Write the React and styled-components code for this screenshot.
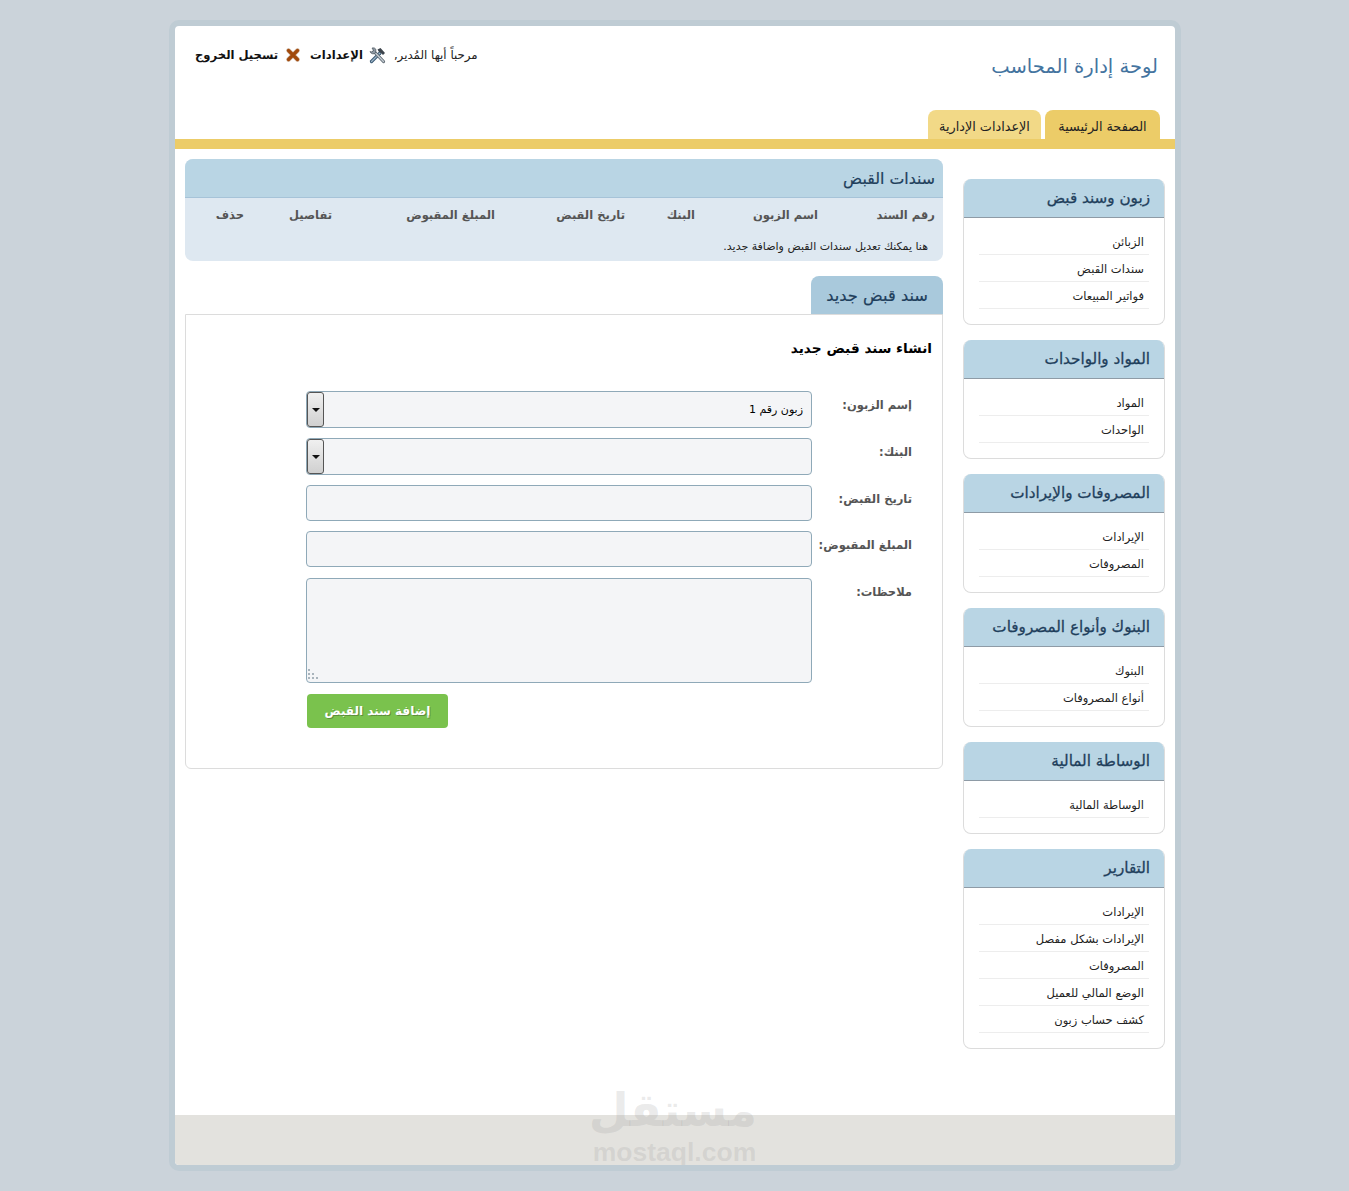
import styled, { createGlobalStyle } from "styled-components";

const GlobalStyle = createGlobalStyle`
	html, body {
		margin: 0;
		padding: 0;
		background: #cbd3da;
	}
	body {
		font-family: "DejaVu Sans", "Liberation Sans", sans-serif;
		font-size: 11px;
		color: #222;
	}
	* {
		box-sizing: border-box;
	}
`;

const Wrapper = styled.div`
	position: relative;
	width: 1012px;
	height: 1151px;
	margin: 20px 0 20px 169px;
	border: 6px solid #bfccd4;
	border-radius: 10px;
	background: #fff;
	display: flex;
	flex-direction: column;
	overflow: hidden;
`;

const Header = styled.header`
	height: 84px;
	padding: 0 17px 0 0;
	display: flex;
	justify-content: space-between;
	direction: rtl;
`;

const Title = styled.h1`
	margin: 27px 0 0;
	font-size: 19.5px;
	line-height: 28px;
	font-weight: 400;
	color: #44749f;
`;

const UserBar = styled.div`
	display: flex;
	align-items: center;
	height: 18px;
	margin: 20px 0 0 20px;
	direction: ltr;
	color: #222;
`;

const UserLink = styled.a`
	font-weight: 700;
	font-size: 11.6px;
	color: #111;
	direction: rtl;
	text-decoration: none;
`;

const Greeting = styled.span`
	direction: rtl;
	font-size: 11.8px;
	margin-left: 8px;
`;

const IconSlot = styled.span`
	display: inline-flex;
	margin: ${(p) => p.$margin};
`;

const Tabs = styled.nav`
	display: flex;
	direction: rtl;
	gap: 4px;
	height: 29px;
	padding-right: 15px;
`;

const Tab = styled.a`
	display: flex;
	align-items: center;
	justify-content: center;
	width: ${(p) => p.$w}px;
	padding-top: 3px;
	height: 29px;
	border-radius: 8px 8px 0 0;
	background: ${(p) => (p.$active ? "#eccc68" : "#f2d987")};
	color: #222;
	font-size: 12.8px;
`;

const GoldBar = styled.div`
	height: 10px;
	background: #eccc68;
`;

const Content = styled.div`
	flex: 1;
	display: flex;
	direction: rtl;
	padding: 10px 10px 0;
	justify-content: flex-start;
	gap: 20px;
`;

const Sidebar = styled.aside`
	width: 202px;
	padding-top: 20px;
	display: flex;
	flex-direction: column;
	gap: 15px;
`;

const SideCard = styled.section`
	border: 1px solid #dcdcdc;
	border-top: 0;
	border-radius: 8px;
	overflow: hidden;
	padding-bottom: 15px;
`;

const SideTitle = styled.h3`
	margin: 0 -1px;
	height: 39px;
	line-height: 39px;
	padding-right: 15px;
	background: #b9d5e4;
	border-bottom: 1px solid #8e9ba6;
	font-size: 15.2px;
	font-weight: 400;
	color: #1f3f5c;
	-webkit-text-stroke: 0.3px #1f3f5c;
`;

const SideList = styled.ul`
	list-style: none;
	margin: 10px 15px 0 15px;
	padding: 0;
`;

const SideItem = styled.li`
	height: 27px;
	line-height: 26px;
	padding: 1px 5px 0 0;
	border-bottom: 1px solid #ededed;
	font-size: 11.5px;
	color: #222;
`;

const Main = styled.main`
	width: 758px;
	display: flex;
	flex-direction: column;
`;

const ListPanel = styled.section`
	border-radius: 8px;
	overflow: hidden;
	background: #dee8f1;
	height: 102px;
`;

const PanelTitle = styled.h2`
	margin: 0;
	height: 39px;
	line-height: 39px;
	padding-right: 8px;
	background: #b9d5e4;
	border-bottom: 1px solid #a6c3d8;
	font-size: 15.8px;
	font-weight: 400;
	color: #1f3f5c;
	-webkit-text-stroke: 0.2px #1f3f5c;
`;

const Table = styled.table`
	width: 100%;
	table-layout: fixed;
	border-collapse: collapse;
`;

const Th = styled.th`
	width: ${(p) => p.$w}px;
	padding: 8px 8px 0;
	height: 26px;
	text-align: right;
	font-size: 11.5px;
	font-weight: 700;
	color: #555;
	white-space: nowrap;
`;

const NoteCell = styled.td`
	padding: 16px 15px 0 0;
	font-size: 11px;
	color: #222;
`;

const FormTab = styled.div`
	align-self: flex-start;
	width: 132px;
	height: 39px;
	margin-top: 15px;
	line-height: 39px;
	padding-right: 15px;
	border-radius: 8px 8px 0 0;
	background: #a9c9dc;
	font-size: 16.3px;
	color: #1f3f5c;
	-webkit-text-stroke: 0.2px #1f3f5c;
	white-space: nowrap;
`;

const FormPanel = styled.section`
	height: 455px;
	margin-top: -1px;
	padding: 23px 10px 0;
	border: 1px solid #dcdcdc;
	border-radius: 0 0 6px 6px;
`;

const FormTitle = styled.h4`
	margin: 0 0 33px;
	font-size: 13.7px;
	line-height: 20px;
	color: #000;
`;

const FormRow = styled.div`
	display: flex;
	align-items: flex-start;
	margin-bottom: ${(p) => p.$gap ?? 10}px;
`;

const Label = styled.label`
	width: 120px;
	padding: 6px 20px 0 0;
	flex-shrink: 0;
	font-size: 11.5px;
	font-weight: 700;
	line-height: 16px;
	color: #555;
	white-space: nowrap;
`;

const Field = styled.div`
	width: 506px;
	height: ${(p) => p.$h ?? 36}px;
	border: 1px solid #8fa9b8;
	border-radius: 4px;
	background: #f4f5f7;
	position: relative;
	display: flex;
	align-items: center;
	justify-content: space-between;
	color: #000;
	font-size: 11px;
	padding-right: 8px;
`;

const SelectArrow = styled.span`
	width: 17px;
	height: 100%;
	border: 1px solid #555;
	border-radius: 3px;
	background: linear-gradient(#f0f0f0, #d0d0d0);
	display: flex;
	align-items: center;
	justify-content: center;
	&::after {
		content: "";
		border: 4px solid transparent;
		border-top: 4px solid #111;
		border-bottom: 0;
	}
`;

const ResizeGrip = styled.svg`
	position: absolute;
	left: 1px;
	bottom: 2px;
`;

const SubmitRow = styled.div`
	padding-right: 484px;
	margin-top: 11px;
`;

const SubmitButton = styled.button`
	width: 141px;
	height: 34px;
	border: 0;
	border-radius: 4px;
	background: #7ac24d;
	color: #fff;
	font-family: inherit;
	font-size: 12px;
	font-weight: 700;
	white-space: nowrap;
	text-shadow: 1px 1px 0 #5d8f3b;
`;

const Footer = styled.footer`
	height: 50px;
	background: #e3e2de;
`;

const Watermark = styled.div`
	position: absolute;
	left: 417px;
	bottom: 0;
	width: 165px;
	display: flex;
	flex-direction: column;
	gap: 4px;
	text-align: center;
	color: rgba(150, 150, 150, 0.2);
	font-weight: 700;
	pointer-events: none;
`;

const WatermarkLogo = styled.div`
	font-size: 46px;
	line-height: 50px;
	direction: rtl;
`;

const WatermarkText = styled.div`
	font-family: "Liberation Sans", sans-serif;
	font-size: 26.5px;
	line-height: 26px;
`;

const ToolsIcon = () => (
	<svg width="17" height="17" viewBox="0 0 17 17">
		<path d="M2.5 14.5 L11 6" stroke="#33536f" strokeWidth="3.2" strokeLinecap="round" />
		<path d="M2.5 14.5 L11 6" stroke="#9fb7c9" strokeWidth="1.4" strokeLinecap="round" />
		<path d="M8.5 2.5 L11.5 1 L16 6 L14 8 L12 6 L10 5 Z" fill="#3d444c" />
		<path d="M5 4.5 L14.5 14.5" stroke="#5c6770" strokeWidth="3.2" strokeLinecap="round" />
		<path d="M5 4.5 L14.5 14.5" stroke="#c3cbd2" strokeWidth="1.4" strokeLinecap="round" />
		<path d="M1 4.5 A3.4 3.4 0 0 0 6.5 6 L7 2.5 A3.4 3.4 0 0 0 3 1 L4.5 3.5 L3 5 Z" fill="#8e99a3" stroke="#4c565f" strokeWidth="0.7" />
	</svg>
);

const CloseIcon = () => (
	<svg width="14" height="14" viewBox="0 0 14 14">
		<path d="M2.5 2.5 L11.5 11.5 M11.5 2.5 L2.5 11.5" stroke="#d9c7b8" strokeWidth="4.6" strokeLinecap="round" />
		<path d="M2.5 2.5 L11.5 11.5 M11.5 2.5 L2.5 11.5" stroke="#a14a0c" strokeWidth="3.4" strokeLinecap="round" />
	</svg>
);

const sideMenus = [
	{ title: "زبون وسند قبض", items: ["الزبائن", "سندات القبض", "فواتير المبيعات"] },
	{ title: "المواد والواحدات", items: ["المواد", "الواحدات"] },
	{ title: "المصروفات والإيرادات", items: ["الإيرادات", "المصروفات"] },
	{ title: "البنوك وأنواع المصروفات", items: ["البنوك", "أنواع المصروفات"] },
	{ title: "الوساطة المالية", items: ["الوساطة المالية"] },
	{
		title: "التقارير",
		items: ["الإيرادات", "الإيرادات بشكل مفصل", "المصروفات", "الوضع المالي للعميل", "كشف حساب زبون"],
	},
];

const columns = [
	{ label: "رقم السند", w: 117 },
	{ label: "اسم الزبون", w: 123 },
	{ label: "البنك", w: 70 },
	{ label: "تاريخ القبض", w: 130 },
	{ label: "المبلغ المقبوض", w: 163 },
	{ label: "تفاصيل", w: 88 },
	{ label: "حذف", w: 67 },
];

export default function App() {
	return (
		<>
			<GlobalStyle />
			<Wrapper>
				<Header>
					<Title>لوحة إدارة المحاسب</Title>
					<UserBar>
						<UserLink href="#">تسجيل الخروج</UserLink>
						<IconSlot $margin="0 10px 0 8px"><CloseIcon /></IconSlot>
						<UserLink href="#">الإعدادات</UserLink>
						<IconSlot $margin="0 0 0 6px"><ToolsIcon /></IconSlot>
						<Greeting>مرحباً أيها المُدير,</Greeting>
					</UserBar>
				</Header>
				<Tabs>
					<Tab $active $w={115}>الصفحة الرئيسية</Tab>
					<Tab $w={113}>الإعدادات الإدارية</Tab>
				</Tabs>
				<GoldBar />
				<Content>
					<Sidebar>
						{sideMenus.map((menu) => (
							<SideCard key={menu.title}>
								<SideTitle>{menu.title}</SideTitle>
								<SideList>
									{menu.items.map((item) => (
										<SideItem key={item}>{item}</SideItem>
									))}
								</SideList>
							</SideCard>
						))}
					</Sidebar>
					<Main>
						<ListPanel>
							<PanelTitle>سندات القبض</PanelTitle>
							<Table>
								<thead>
									<tr>
										{columns.map((col) => (
											<Th key={col.label} $w={col.w}>{col.label}</Th>
										))}
									</tr>
								</thead>
								<tbody>
									<tr>
										<NoteCell colSpan={7}>هنا يمكنك تعديل سندات القبض واضافة جديد.</NoteCell>
									</tr>
								</tbody>
							</Table>
						</ListPanel>
						<FormTab>سند قبض جديد</FormTab>
						<FormPanel>
							<FormTitle>انشاء سند قبض جديد</FormTitle>
							<FormRow>
								<Label>إسم الزبون:</Label>
								<Field $h={37}>
									زبون رقم 1
									<SelectArrow />
								</Field>
							</FormRow>
							<FormRow>
								<Label>البنك:</Label>
								<Field $h={37}>
									<span />
									<SelectArrow />
								</Field>
							</FormRow>
							<FormRow>
								<Label>تاريخ القبض:</Label>
								<Field />
							</FormRow>
							<FormRow $gap={11}>
								<Label>المبلغ المقبوض:</Label>
								<Field />
							</FormRow>
							<FormRow $gap={0}>
								<Label>ملاحظات:</Label>
								<Field $h={105}>
									<ResizeGrip width="11" height="11" viewBox="0 0 11 11">
										<path d="M0 0h2v2H0zM0 4h2v2H0zM4 4h2v2H4zM0 8h2v2H0zM4 8h2v2H4zM8 8h2v2H8z" fill="#a9b4bc" />
									</ResizeGrip>
								</Field>
							</FormRow>
							<SubmitRow>
								<SubmitButton>إضافة سند القبض</SubmitButton>
							</SubmitRow>
						</FormPanel>
					</Main>
				</Content>
				<Footer />
				<Watermark>
					<WatermarkLogo>مستقل</WatermarkLogo>
					<WatermarkText>mostaql.com</WatermarkText>
				</Watermark>
			</Wrapper>
		</>
	);
}
